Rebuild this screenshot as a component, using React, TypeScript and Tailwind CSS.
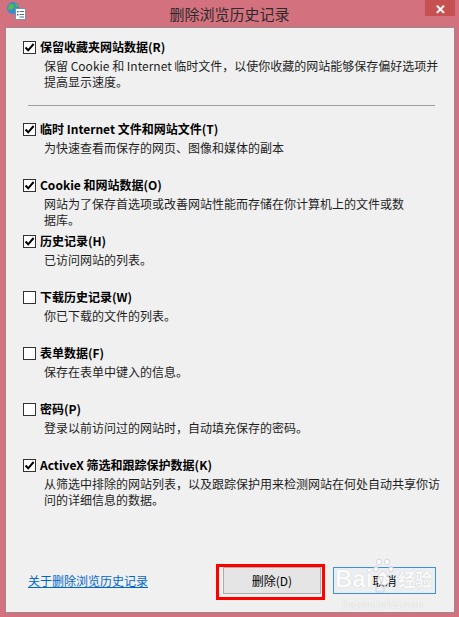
import React from "react";

type Item = {
  label: string;
  lines: string[];
  checked: boolean;
};

const items: Item[] = [
  {
    label: "临时 Internet 文件和网站文件(T)",
    lines: ["为快速查看而保存的网页、图像和媒体的副本"],
    checked: true,
  },
  {
    label: "Cookie 和网站数据(O)",
    lines: ["网站为了保存首选项或改善网站性能而存储在你计算机上的文件或数", "据库。"],
    checked: true,
  },
  { label: "历史记录(H)", lines: ["已访问网站的列表。"], checked: true },
  { label: "下载历史记录(W)", lines: ["你已下载的文件的列表。"], checked: false },
  { label: "表单数据(F)", lines: ["保存在表单中键入的信息。"], checked: false },
  { label: "密码(P)", lines: ["登录以前访问过的网站时，自动填充保存的密码。"], checked: false },
  {
    label: "ActiveX 筛选和跟踪保护数据(K)",
    lines: ["从筛选中排除的网站列表，以及跟踪保护用来检测网站在何处自动共享你访", "问的详细信息的数据。"],
    checked: true,
  },
];

const font = { fontFamily: '"Noto Sans CJK SC", "Noto Sans", sans-serif' };

function Checkbox({ checked }: { checked: boolean }) {
  return (
    <span className="flex h-[13px] w-[13px] shrink-0 items-center justify-center border border-[#333333] bg-white">
      {checked && (
        <svg width="11" height="11" viewBox="0 0 11 11">
          <path d="M1.5 5.5 L4.2 8.3 L9.6 2" fill="none" stroke="#000" strokeWidth="2" />
        </svg>
      )}
    </span>
  );
}

function Option({ item, className }: { item: Item; className?: string }) {
  return (
    <div className={className}>
      <div className="flex h-4 items-center gap-[4px]">
        <Checkbox checked={item.checked} />
        <span className="whitespace-nowrap text-[12px] font-bold leading-4 text-black">{item.label}</span>
      </div>
      <div className="mt-[3px] pl-[21px] text-[12px] leading-4 text-[#1e1e1e]">
        {item.lines.map((l) => (
          <div key={l} className="whitespace-nowrap">
            {l}
          </div>
        ))}
      </div>
    </div>
  );
}

function TitleIcon() {
  return (
    <svg width="20" height="20" viewBox="0 0 20 20">
      <circle cx="7" cy="7" r="6" fill="#2f8fd0" />
      <path d="M3 4 Q6 2 8 4 Q9 7 6 8 Q4 10 2 8 Z" fill="#5cb845" />
      <path d="M9 2 Q12 3 12 6 L10 6 Z" fill="#5cb845" />
      <rect x="9.5" y="7.5" width="10" height="11" fill="#ffffff" stroke="#7a8fa8" />
      <rect x="11" y="10" width="1.5" height="1.5" fill="#2a6fc0" />
      <rect x="13.5" y="10" width="4.5" height="1" fill="#5a6f88" />
      <rect x="11" y="13" width="1.5" height="1.5" fill="#2a6fc0" />
      <rect x="13.5" y="13" width="4.5" height="1" fill="#5a6f88" />
      <rect x="13.5" y="15.5" width="4.5" height="1" fill="#5a6f88" />
    </svg>
  );
}

// faint Baidu watermark paw
function Paw() {
  return (
    <svg width="22" height="36" viewBox="0 0 22 36" fill="#ffffff" stroke="#c4c4c4" strokeWidth="0.8">
      <ellipse cx="6" cy="4" rx="2.5" ry="3" />
      <ellipse cx="14" cy="4" rx="2.5" ry="3" />
      <ellipse cx="3" cy="11" rx="2.3" ry="2.8" />
      <ellipse cx="18" cy="11" rx="2.3" ry="2.8" />
      <path d="M10 13 C5 16 3 22 5 25 C7 28 13 28 16 25 C18 22 15 16 10 13 Z" />
      <path d="M3 20 L3 34 L11 34 M11 27 L11 34" fill="none" />
    </svg>
  );
}

export default function App() {
  return (
    <div className="flex h-[617px] w-[459px] flex-col bg-[#d4717f]" style={font}>
      <div className="relative flex h-[27px] shrink-0 items-center justify-center">
        <div className="absolute left-[6px] top-[1px]">
          <TitleIcon />
        </div>
        <span className="text-[15px] leading-5 text-[#2b2b2b]">删除浏览历史记录</span>
        <div className="absolute right-[4px] top-0 flex h-[16px] w-[30px] items-center justify-center bg-[#c75050] text-[13px] font-bold leading-none text-white">
          ✕
        </div>
      </div>

      <div className="mb-[4px] ml-[5px] mr-[4px] flex flex-1 flex-col border border-[#9b8a8d] bg-[#f0f0f0] pl-[17px]">
        <Option
          className="pt-[11px]"
          item={{
            label: "保留收藏夹网站数据(R)",
            lines: ["保留 Cookie 和 Internet 临时文件，以使你收藏的网站能够保存偏好选项并", "提高显示速度。"],
            checked: true,
          }}
        />
        <div className="mr-[19px] ml-[5px] mt-[15px] h-px bg-[#a0a0a0]" />
        <div className="pt-[15px]">
          {items.map((it) => (
            <Option key={it.label} item={it} className="h-[56px]" />
          ))}
        </div>

        <div className="mt-auto flex items-center justify-between pb-[18px] pr-[18px]">
          <span className="ml-[5px] text-[12px] leading-4 text-[#0066cc] underline">关于删除浏览历史记录</span>
          <div className="flex gap-[12px]">
            <div className="relative">
              <div className="flex h-[27px] w-[98px] items-center justify-center border border-[#acacac] bg-[#e5e5e5] text-[12px] text-black">
                删除(D)
              </div>
              <div className="absolute -bottom-[6px] -left-[7px] -right-[4px] -top-[3px] border-[3px] border-[#ff0000]" />
            </div>
            <div className="relative">
              <div className="flex h-[27px] w-[103px] items-center justify-center border border-[#3c8fe6] bg-[#eceff2] text-[12px] text-black">
                取消
              </div>
              <div className="pointer-events-none absolute -top-[9px] left-[2px] flex items-end gap-[1px] opacity-80">
                <span
                  className="text-[24px] font-bold leading-[30px] text-white [text-shadow:0_0_1px_#b0b0b0]"
                  style={{ fontFamily: '"Liberation Sans", sans-serif' }}
                >
                  Bai
                </span>
                <Paw />
                <span className="ml-[2px] text-[17px] font-bold leading-[30px] text-white [text-shadow:0_0_1px_#b0b0b0]">
                  经验
                </span>
              </div>
              <div
                className="pointer-events-none absolute -bottom-[17px] left-[9px] text-[10px] leading-3 text-white opacity-80 [text-shadow:0_0_1px_#b0b0b0]"
                style={{ fontFamily: '"Liberation Sans", sans-serif' }}
              >
                jingyan.baidu.com
              </div>
            </div>
          </div>
        </div>
      </div>
    </div>
  );
}
